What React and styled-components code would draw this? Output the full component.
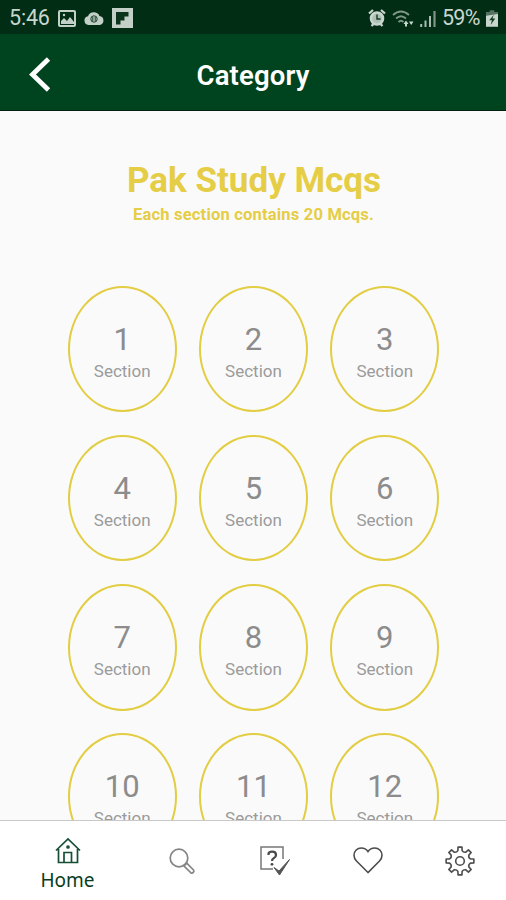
import React from "react";
import styled, { createGlobalStyle } from "styled-components";

const GlobalStyle = createGlobalStyle`
  * { box-sizing: border-box; }
  body { margin: 0; background: #fafafa; font-family: Roboto, sans-serif; }
`;

const Screen = styled.div`
  width: 506px;
  height: 900px;
  display: flex;
  flex-direction: column;
  overflow: hidden;
  background: #fafafa;
`;

const StatusBar = styled.div`
  height: 34px;
  flex: none;
  display: flex;
  align-items: center;
  justify-content: space-between;
  padding: 2px 8px 0 9px;
  background: #002d14;
  color: #c9d6cd;
`;

const StatusGroup = styled.div`
  display: flex;
  align-items: center;
  gap: ${(p) => p.$gap}px;
`;

const StatusText = styled.span`
  font-size: 21.5px;
  line-height: 32px;
  letter-spacing: ${(p) => p.$spacing || 0}px;
  white-space: nowrap;
`;

const Icon = styled.svg`
  display: block;
  flex: none;
  fill: none;
  overflow: visible;
`;

const Header = styled.header`
  height: 77px;
  flex: none;
  display: grid;
  grid-template-columns: 80px 1fr 80px;
  align-items: center;
  background: #00431f;
  border-bottom: 1px solid #001f0c;
  color: #fff;
`;

const BackButton = styled.button`
  border: 0;
  padding: 0 0 0 29px;
  background: none;
  margin-top: 4px;
`;

const HeaderTitle = styled.h1`
  margin: 7px 0 0;
  font-size: 27.5px;
  font-weight: 600;
  line-height: 32px;
  text-align: center;
  letter-spacing: 0.15px;
`;

const Content = styled.main`
  flex: 1;
  min-height: 0;
  overflow: hidden;
  display: flex;
  flex-direction: column;
  align-items: center;
  color: #e5cd45;
`;

const Title = styled.h2`
  margin: 49px 0 0 2px;
  font-size: 35px;
  line-height: 42px;
  font-weight: 700;
  letter-spacing: 0;
  white-space: nowrap;
`;

const Subtitle = styled.p`
  margin: 3px 0 0 1px;
  font-size: 16.5px;
  line-height: 20px;
  font-weight: 700;
  letter-spacing: 0.2px;
  white-space: nowrap;
`;

const Sections = styled.div`
  flex: none;
  margin: 60.7px 0 0 1px;
  display: grid;
  grid-template-columns: repeat(3, 109px);
  grid-auto-rows: 126.5px;
  gap: 22.7px 22.3px;
`;

const Section = styled.button`
  border: 2px solid #e2cd43;
  border-radius: 50%;
  padding: 0;
  background: transparent;
  font-family: inherit;
  display: flex;
  flex-direction: column;
  align-items: center;
  justify-content: flex-start;
`;

const SectionNumber = styled.span`
  margin-top: 34px;
  font-size: 31px;
  line-height: 36px;
  color: #8c8c8c;
`;

const SectionLabel = styled.span`
  margin-top: 3px;
  font-size: 17px;
  line-height: 20px;
  color: #9b9b9b;
`;

const NavBar = styled.nav`
  height: 80px;
  flex: none;
  display: grid;
  grid-template-columns: 135px 93px 93px 93px 92px;
  background: #fff;
  border-top: 1px solid #c9c9c9;
`;

const NavItem = styled.button`
  border: 0;
  padding: ${(p) => p.$top}px 0 0;
  background: none;
  display: flex;
  flex-direction: column;
  align-items: center;
  color: ${(p) => (p.$active ? "#164f35" : "#4d4d4d")};
`;

const NavLabel = styled.span`
  margin-top: 3px;
  font-family: "Noto Sans", sans-serif;
  font-size: 19px;
  line-height: 27px;
  color: #083b22;
`;

const gearPath = (() => {
  const center = 15;
  const samples = 8;
  const at = (angle, r) =>
    `${(center + r * Math.cos(angle)).toFixed(2)} ${(center + r * Math.sin(angle)).toFixed(2)}`;
  let path = "";
  for (let i = 0; i < samples; i += 1) {
    const mid = (i * 2 * Math.PI) / samples - Math.PI / 2;
    path += `${i === 0 ? "M" : "L"}${at(mid - 0.2, 10.6)}`;
    path += `L${at(mid - 0.14, 14)}L${at(mid + 0.14, 14)}L${at(mid + 0.2, 10.6)}`;
    path += `Q${at(mid + Math.PI / 8, 9)} ${at(mid + Math.PI / 4 - 0.2, 10.6)}`;
  }
  return `${path}Z`;
})();

const PhotoIcon = () => (
  <Icon width="18" height="17" viewBox="0 0 18 17">
    <rect x="1" y="1" width="16" height="15" rx="1" stroke="#c2d0c7" strokeWidth="2" />
    <path d="M3 14V11l3-3 3 3 3-4 4 5v2Z" fill="#c2d0c7" />
    <circle cx="6" cy="5" r="1.2" fill="#c2d0c7" />
  </Icon>
);

const CloudIcon = () => (
  <Icon width="20" height="14" viewBox="0 0 20 14">
    <path d="M4.5 14A4.4 4.4 0 0 1 4 5.3 6.2 6.2 0 0 1 15.5 5 4.6 4.6 0 0 1 16 14Z" fill="#c2d0c7" />
    <circle cx="10" cy="8" r="3.2" stroke="#193e28" strokeWidth="1" />
    <path d="M8.8 6v4M11.2 6v4" stroke="#193e28" strokeWidth="1" />
  </Icon>
);

const FlipIcon = () => (
  <Icon width="21" height="20" viewBox="0 0 21 20">
    <path d="M0 0h21v20H0Z" fill="#c2d0c7" />
    <path d="M4 4h12.500v4.500H12.500v4H8.500v4H4Z" fill="#0b341c" />
  </Icon>
);

const AlarmIcon = () => (
  <Icon width="18" height="18" viewBox="0 0 18 18">
    <circle cx="9" cy="9.500" r="6" fill="#aebfb3" stroke="#c9d6cd" strokeWidth="2.600" />
    <path d="M1 4.500 5 1M17 4.500 13 1M3.500 17l2-2M14.500 17l-2-2" stroke="#c9d6cd" strokeWidth="2.300" />
    <path d="M9 5.500v4.500h3.500" stroke="#15391f" strokeWidth="1.400" />
  </Icon>
);

const WifiIcon = () => (
  <Icon width="22" height="17" viewBox="0 0 22 17">
    <path d="M1 5Q9-2 17 5M4 8.500q5-4.500 10 0M6.500 12q2.500-2.500 5 0" stroke="#7f9788" strokeWidth="1.800" />
    <path d="m11.500 14 2.500-3.500 2.500 3.500H15v2.500h-2V14ZM17 11.500h4.500L19.200 15Z" fill="#c9d6cd" />
  </Icon>
);

const SignalIcon = () => (
  <Icon width="16" height="17" viewBox="0 0 16 17">
    <path d="M1.200 17v-3M5.500 17V10.500M10 17V6" stroke="#a9bbae" strokeWidth="2" />
    <path d="M14.500 17V1" stroke="#7f9686" strokeWidth="2.200" />
  </Icon>
);

const BatteryIcon = () => (
  <Icon width="12" height="17" viewBox="0 0 13 18">
    <path d="M4 0h5v2h4v6H0V2h4Z" fill="#557261" />
    <path d="M0 6 13 4v14H0Z" fill="#c9d6cd" />
    <path d="M8.500 5 3.500 11h3L5 16l5-7H7Z" fill="#14391f" />
  </Icon>
);

const BackIcon = () => (
  <Icon width="22" height="35" viewBox="0 0 22 35">
    <path d="M19.500 2 3.500 17.500 19.500 33" stroke="#fff" strokeWidth="4.800" />
  </Icon>
);

const HomeIcon = () => (
  <Icon width="26" height="27" viewBox="0 0 26 27" stroke="currentColor" strokeWidth="1.700">
    <path d="M1 13.500 13 2l12 11.500M3.500 12v13.500h19V12" />
    <path d="M9 25V15.500h7.500V25" />
    <circle cx="13" cy="10" r="1" />
  </Icon>
);

const SearchIcon = () => (
  <Icon width="26" height="26" viewBox="0 0 26 26" stroke="#858585" strokeWidth="1.700">
    <circle cx="10" cy="10" r="8.800" />
    <path d="m15 18 2.800-2.800 6.700 6.800q1 1.200-.2 2.400t-2.600.3Z" />
  </Icon>
);

const QuizIcon = () => (
  <Icon width="30" height="30" viewBox="0 0 30 30">
    <path d="M13 23H1V1h22v12" stroke="#777" strokeWidth="1.500" />
    <path d="M8.500 9V8.300Q8.500 5.700 12.200 5.700 16 5.700 16 9q0 2-2 3-2 1-2 3" stroke="#4b4b4b" strokeWidth="2.300" />
    <circle cx="12" cy="18.300" r="1.400" fill="#4b4b4b" />
    <path d="m14 21.500 5 3.500L29.500 13.500 19.500 29Z" fill="#555" stroke="#555" />
  </Icon>
);

const HeartIcon = () => (
  <Icon width="30" height="27" viewBox="0 0 30 27" stroke="currentColor" strokeWidth="1.600">
    <path d="M15 25.500 3.500 14Q1 11.500 1 8.300C1 4 4.300 1 8.300 1 11.500 1 13.500 2.300 15 4.500 16.500 2.300 18.500 1 21.700 1 25.700 1 29 4 29 8.300q0 3.200-2.500 5.700Z" />
  </Icon>
);

const GearIcon = () => (
  <Icon width="30" height="30" viewBox="0 0 30 30" stroke="currentColor" strokeWidth="1.600" strokeLinejoin="round">
    <path d={gearPath} />
    <circle cx="15" cy="15" r="4.300" />
  </Icon>
);

const sections = Array.from({ length: 12 }, (_, i) => i + 1);

export default function App() {
  return (
    <Screen>
      <GlobalStyle />
      <StatusBar>
        <StatusGroup $gap={8}>
          <StatusText $spacing={-0.2}>5:46</StatusText>
          <PhotoIcon />
          <CloudIcon />
          <FlipIcon />
        </StatusGroup>
        <StatusGroup $gap={6}>
          <AlarmIcon />
          <WifiIcon />
          <SignalIcon />
          <StatusText $spacing={-0.6}>59%</StatusText>
          <BatteryIcon />
        </StatusGroup>
      </StatusBar>
      <Header>
        <BackButton aria-label="Back"><BackIcon /></BackButton>
        <HeaderTitle>Category</HeaderTitle>
      </Header>
      <Content>
        <Title>Pak Study Mcqs</Title>
        <Subtitle>Each section contains 20 Mcqs.</Subtitle>
        <Sections>
          {sections.map((n) => (
            <Section key={n}>
              <SectionNumber>{n}</SectionNumber>
              <SectionLabel>Section</SectionLabel>
            </Section>
          ))}
        </Sections>
      </Content>
      <NavBar>
        <NavItem $active $top={16}>
          <HomeIcon />
          <NavLabel>Home</NavLabel>
        </NavItem>
        <NavItem $top={27} aria-label="Search"><SearchIcon /></NavItem>
        <NavItem $top={25} aria-label="Quiz"><QuizIcon /></NavItem>
        <NavItem $top={26} aria-label="Favorites"><HeartIcon /></NavItem>
        <NavItem $top={25} aria-label="Settings"><GearIcon /></NavItem>
      </NavBar>
    </Screen>
  );
}
